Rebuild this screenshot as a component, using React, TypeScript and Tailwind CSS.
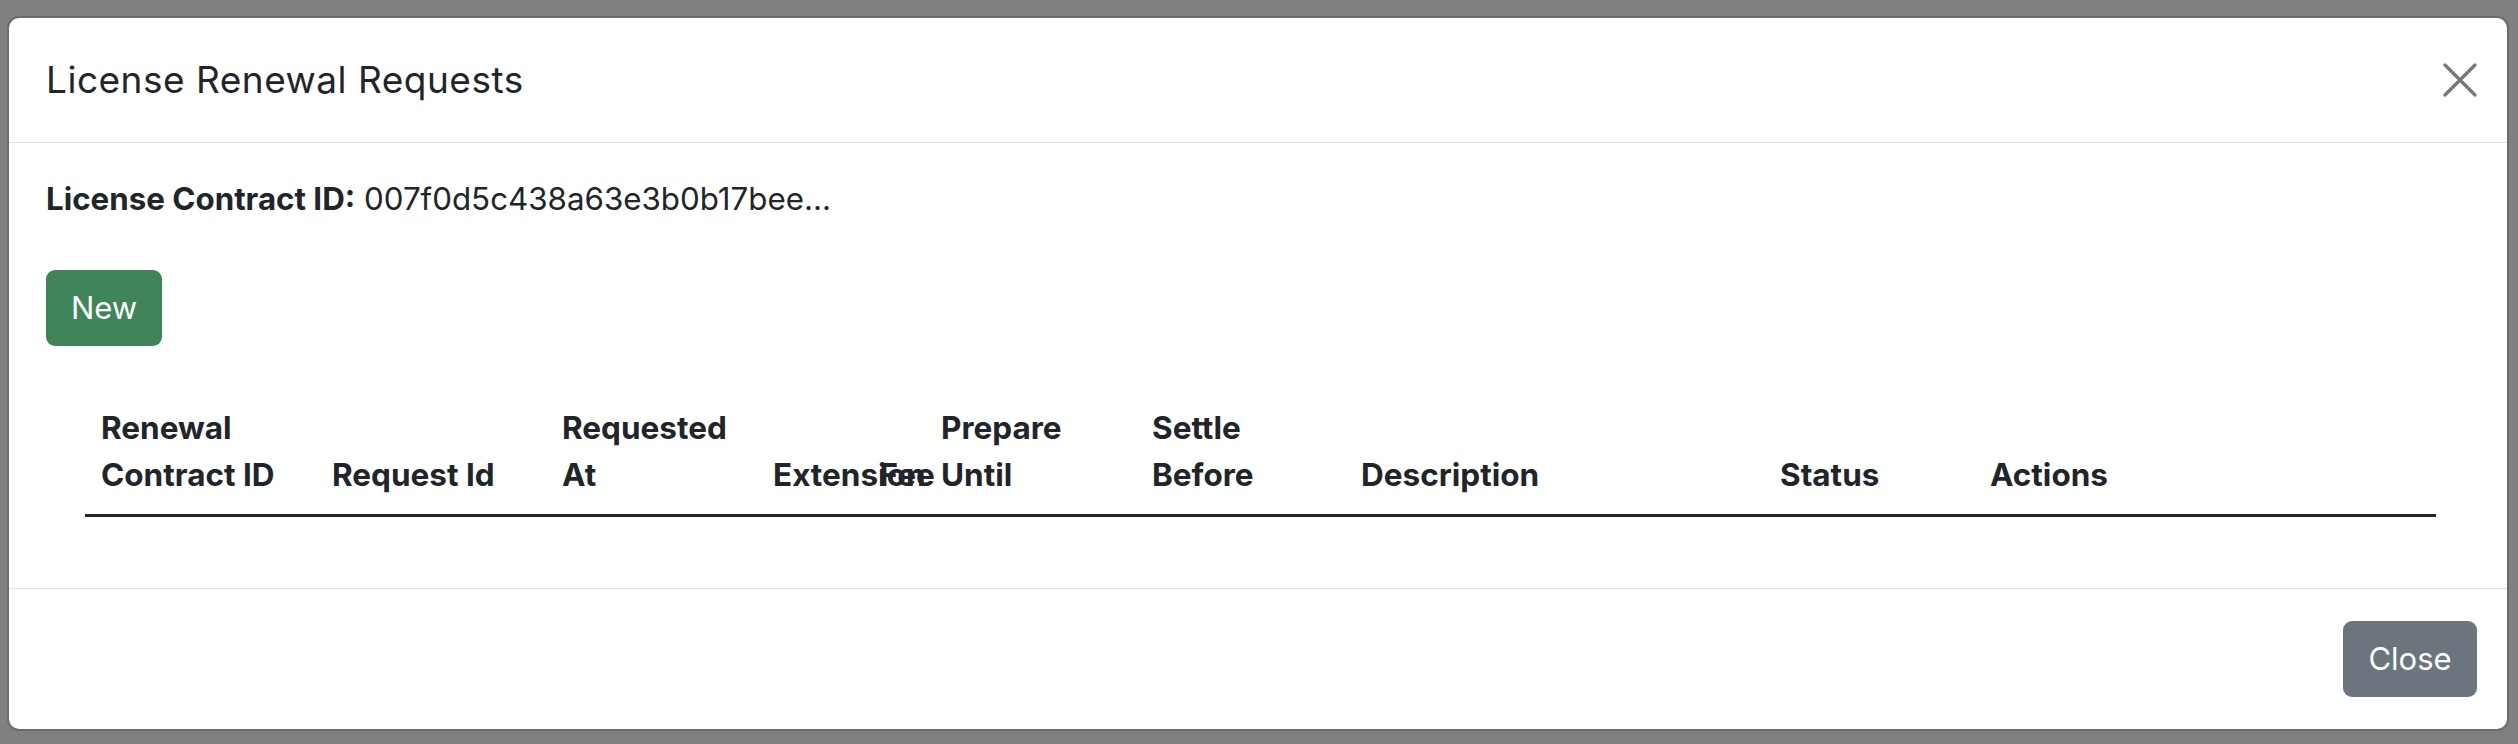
import React from "react";

const cols = [231, 230, 211, 168, 211, 209, 419, 210, 462];

function CloseIcon() {
  return (
    <svg width="34" height="34" viewBox="0 0 34 34" fill="none">
      <path d="M2 2 L32 32 M32 2 L2 32" stroke="#787878" strokeWidth="3.2" strokeLinecap="round" />
    </svg>
  );
}

export default function App() {
  return (
    <div className="w-[2518px] h-[744px] bg-[#808080] pl-[7px] pt-[16px] font-['Inter','Noto_Sans',sans-serif] text-[#212529]">
      <div className="w-[2502px] h-[715px] bg-white rounded-[12px] border-2 border-[#6c6c6c] flex flex-col overflow-hidden">
        <div className="h-[125px] shrink-0 flex items-center justify-between pl-[37px] pr-[30px] border-b border-[#dee2e6]">
          <h5 className="text-[37px] leading-[54px] font-normal tracking-[0.5px]">License Renewal Requests</h5>
          <button className="w-[34px] h-[34px] flex items-center justify-center">
            <CloseIcon />
          </button>
        </div>
        <div className="flex-1 pl-[37px] pt-[32px]">
          <p className="text-[31.3px] leading-[48px]">
            <span className="font-bold">License Contract ID:</span> 007f0d5c438a63e3b0b17bee...
          </p>
          <button className="mt-[47px] w-[116px] h-[76px] rounded-[9px] bg-[#408559] text-white text-[31px] flex items-center justify-center">
            New
          </button>
          <table className="table-fixed ml-[39px] mt-[42px] w-[2351px] border-collapse">
            <colgroup>
              {cols.map((w, i) => (
                <col key={i} style={{ width: w }} />
              ))}
            </colgroup>
            <thead>
              <tr className="text-[31.5px] leading-[47px] font-bold text-left align-bottom">
                <th className="px-[16px] py-[16px] border-b-[3px] border-[#212529]">Renewal Contract ID</th>
                <th className="px-[16px] py-[16px] border-b-[3px] border-[#212529]">Request Id</th>
                <th className="px-[16px] py-[16px] border-b-[3px] border-[#212529]">Requested At</th>
                <th className="px-[16px] py-[16px] border-b-[3px] border-[#212529]">
                  <div className="flex whitespace-nowrap">
                    <span>Extension</span>
                    <span className="ml-[-46px]">Fee</span>
                  </div>
                </th>
                <th className="px-[16px] py-[16px] border-b-[3px] border-[#212529]">Prepare Until</th>
                <th className="px-[16px] py-[16px] border-b-[3px] border-[#212529]">Settle Before</th>
                <th className="px-[16px] py-[16px] border-b-[3px] border-[#212529]">Description</th>
                <th className="px-[16px] py-[16px] border-b-[3px] border-[#212529]">Status</th>
                <th className="px-[16px] py-[16px] border-b-[3px] border-[#212529]">Actions</th>
              </tr>
            </thead>
            <tbody></tbody>
          </table>
        </div>
        <div className="h-[141px] shrink-0 border-t border-[#dee2e6] flex items-center justify-end pr-[30px]">
          <button className="w-[134px] h-[76px] rounded-[9px] bg-[#6c757d] text-white text-[31px] flex items-center justify-center">
            Close
          </button>
        </div>
      </div>
    </div>
  );
}
